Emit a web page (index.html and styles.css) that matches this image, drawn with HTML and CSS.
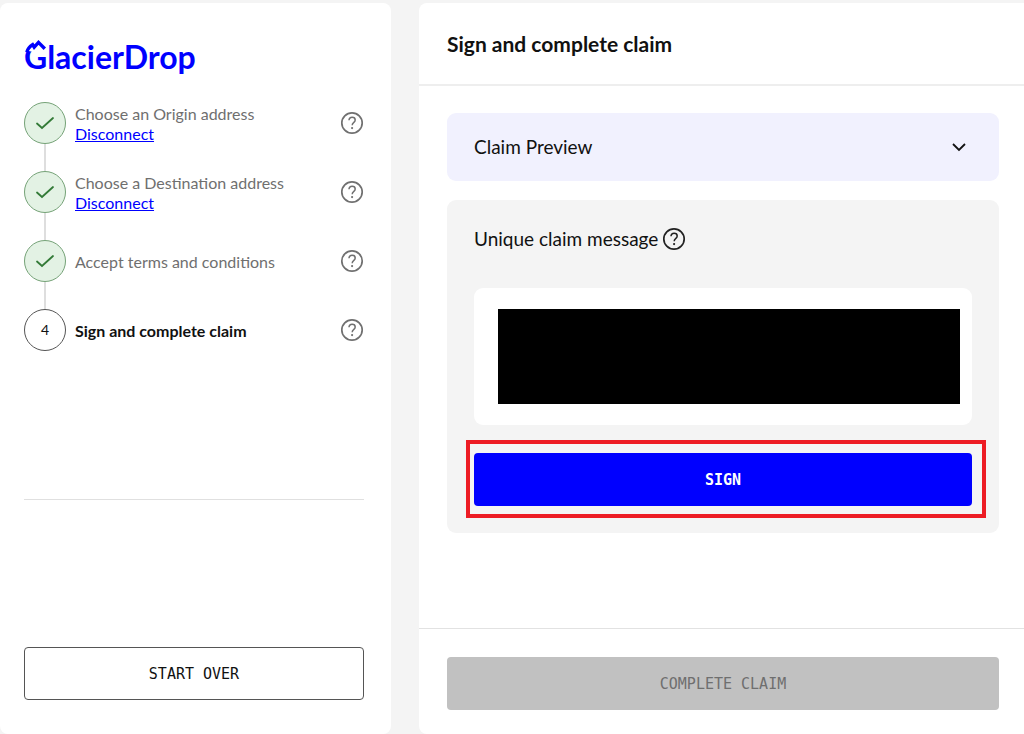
FILE: index.html
```html
<!DOCTYPE html>
<html lang="en">
<head>
<meta charset="utf-8">
<meta name="viewport" content="width=device-width, initial-scale=1">
<title>GlacierDrop</title>
<link rel="stylesheet" href="styles.css">
</head>
<body>
<svg class="sprite" aria-hidden="true">
  <symbol id="check" viewBox="0 0 20 14"><path d="M2 7.5 7 12 18 2" fill="none" stroke="currentColor" stroke-width="1.8" stroke-linecap="round"/></symbol>
  <symbol id="help" viewBox="0 0 24 24"><circle cx="12" cy="12" r="10.2" fill="none" stroke="currentColor" stroke-width="1.7"/><path d="M9 9.3C9 7.4 10.2 6.3 12.1 6.3c1.8 0 3.1 1 3.1 2.6 0 1.3-.7 2-1.6 2.7-1 .8-1.4 1.4-1.4 2.6" fill="none" stroke="currentColor" stroke-width="1.5"/><circle cx="12.1" cy="17.1" r="1.1" fill="currentColor"/></symbol>
</svg>
<div class="page">
  <aside class="card sidebar">
    <div>
      <div class="logo">GlacierDrop
        <svg class="logo-peak" viewBox="0 0 26 16" aria-hidden="true"><path d="M0 0H23V12.5H7L0 11Z" fill="#fff"/><path d="M2.8 13.2C3.6 9.8 5.6 7.6 8.6 5.6L10.2 8.2 14.5 3.4 20.8 9.8" fill="none" stroke="#00f" stroke-width="3.4"/></svg>
      </div>
      <ol class="steps">
        <li class="step">
          <span class="marker done"><svg class="check"><use href="#check"/></svg></span>
          <div class="step-text">Choose an Origin address<a href="#">Disconnect</a></div>
          <button class="help" aria-label="Help: origin address"><svg><use href="#help"/></svg></button>
        </li>
        <li class="step">
          <span class="marker done"><svg class="check"><use href="#check"/></svg></span>
          <div class="step-text">Choose a Destination address<a href="#">Disconnect</a></div>
          <button class="help" aria-label="Help: destination address"><svg><use href="#help"/></svg></button>
        </li>
        <li class="step">
          <span class="marker done"><svg class="check"><use href="#check"/></svg></span>
          <div class="step-text">Accept terms and conditions</div>
          <button class="help" aria-label="Help: terms"><svg><use href="#help"/></svg></button>
        </li>
        <li class="step current">
          <span class="marker">4</span>
          <div class="step-text">Sign and complete claim</div>
          <button class="help" aria-label="Help: signing"><svg><use href="#help"/></svg></button>
        </li>
      </ol>
    </div>
    <hr class="divider">
    <button class="btn outline">START OVER</button>
  </aside>
  <main class="card main">
    <header class="header"><h1>Sign and complete claim</h1></header>
    <div class="content">
      <button class="preview" aria-expanded="false">Claim Preview
        <svg class="chevron" viewBox="0 0 14 9" aria-hidden="true"><path d="M1 1 7 7 13 1" fill="none" stroke="currentColor" stroke-width="1.8"/></svg>
      </button>
      <section class="message">
        <div class="message-title"><h2>Unique claim message</h2><button class="help dark" aria-label="Help: claim message"><svg><use href="#help"/></svg></button></div>
        <div class="message-box"><div class="redacted"></div></div>
        <div class="highlight"><button class="btn primary">SIGN</button></div>
      </section>
    </div>
    <footer class="footer"><button class="btn disabled" disabled>COMPLETE CLAIM</button></footer>
  </main>
</div>
</body>
</html>
```
FILE: styles.css
```css
* { box-sizing: border-box; }
body {
  margin: 0;
  background: #f4f4f4;
  color: #111;
  font-family: Lato, "Open Sans", sans-serif;
  font-size: 16px;
  line-height: 20px;
}
button { font: inherit; color: inherit; border: 0; background: none; padding: 0; cursor: pointer; }
h1, h2 { margin: 0; }
.sprite { position: absolute; width: 0; height: 0; }
.page {
  display: grid;
  grid-template-columns: 391px minmax(0, 1fr);
  gap: 28px;
  min-height: 100vh;
  padding-top: 3px;
}
.card { background: #fff; display: flex; flex-direction: column; }
.sidebar {
  justify-content: space-between;
  padding: 34px 27px 34px 24px;
  border-radius: 8px;
}
.logo {
  position: relative;
  width: max-content;
  color: #00f;
  font-size: 32px;
  font-weight: 700;
  line-height: 40px;
}
.logo-peak { position: absolute; left: 0; top: 2px; width: 26px; height: 16px; }
.steps { list-style: none; margin: 25px 0 0; padding: 0; display: grid; gap: 27px; }
.step { position: relative; display: flex; align-items: center; gap: 9px; height: 42px; color: #6f6f6f; }
.step:not(:last-child)::after {
  content: "";
  position: absolute;
  left: 20px;
  top: 42px;
  width: 2px;
  height: 27px;
  background: #dedede;
}
.marker {
  display: grid;
  place-items: center;
  flex: none;
  width: 42px;
  height: 42px;
  border: 1px solid #555;
  border-radius: 50%;
  color: #111;
  font-size: 14px;
}
.done { border-color: #75a277; background: #e3f2e4; color: #337a37; }
.check { width: 20px; height: 14px; }
.step-text { flex: 1; padding-top: 2px; }
.step-text a { display: block; width: max-content; color: #00f; }
.current .step-text { color: #111; font-weight: 700; }
.help { display: grid; width: 24px; height: 24px; color: #707070; }
.help svg { width: 24px; height: 24px; }
.dark { color: #222; }
.divider { width: 100%; height: 1px; margin: 0; border: 0; background: #e0e0e0; }
.btn {
  display: block;
  width: 100%;
  height: 53px;
  border-radius: 4px;
  font-family: "DejaVu Sans Mono", monospace;
  font-size: 15px;
}
.outline { border: 1px solid #555; }
.primary { background: #00f; color: #fff; font-weight: 700; }
.disabled { background: #c1c1c1; color: #6f6f6f; cursor: default; }
.main { border-radius: 8px 0 0 8px; }
.header { padding: 29px 28px 28px; border-bottom: 2px solid #eee; }
.header h1 { font-size: 21px; font-weight: 700; line-height: 24px; }
.content { flex: 1; display: grid; align-content: start; gap: 19px; padding: 27px 25px 28px 28px; }
.preview {
  display: flex;
  align-items: center;
  justify-content: space-between;
  height: 68px;
  padding: 0 33px 0 27px;
  border-radius: 9px;
  background: #f1f1fe;
  font-size: 19px;
}
.chevron { width: 14px; height: 9px; }
.message { padding: 27px; border-radius: 9px; background: #f4f4f4; }
.message-title { display: flex; align-items: center; gap: 4px; }
.message-title h2 { font-size: 19px; font-weight: 400; line-height: 24px; }
.message-box { margin-top: 37px; padding: 21px 12px 21px 24px; border-radius: 9px; background: #fff; }
.redacted { height: 95px; background: #000; }
.highlight { margin: 15px -14px -12px -8px; padding: 9px 10px 8px 4px; border: 4px solid #ed1c24; }
.footer { padding: 28px 25px 24px 28px; border-top: 1px solid #e2e2e2; }
```
